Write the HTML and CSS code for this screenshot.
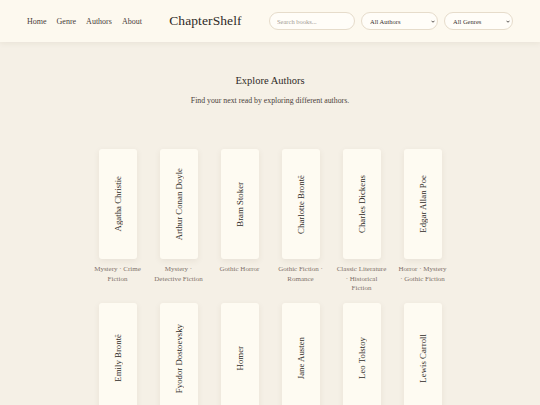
FILE: index.html
```html
<!DOCTYPE html>
<html lang="en">

<head>
    <meta charset="UTF-8">
    <meta name="viewport" content="width=device-width, initial-scale=1.0">
    <title>ChapterShelf - Explore Authors</title>
    <link rel="stylesheet" href="styles.css">
</head>

<body>
<!-- top bar -->
<header class="site-header">
    <nav class="main-nav">
        <a href="#">Home</a>
        <a href="#">Genre</a>
        <a href="#">Authors</a>
        <a href="#">About</a>
    </nav>
    <div class="logo">ChapterShelf</div>
    <div class="controls">
        <input class="search" type="text" placeholder="Search books...">
        <div class="select-wrap filter-authors">
            <select class="filter">
                <option>All Authors</option>
            </select>
            <svg class="chevron" viewBox="0 0 8 5" width="4" height="3"><path d="M1 1l3 3 3-3" fill="none" stroke="#2f2a27" stroke-width="1.6"/></svg>
        </div>
        <div class="select-wrap filter-genres">
            <select class="filter">
                <option>All Genres</option>
            </select>
            <svg class="chevron" viewBox="0 0 8 5" width="4" height="3"><path d="M1 1l3 3 3-3" fill="none" stroke="#2f2a27" stroke-width="1.6"/></svg>
        </div>
    </div>
</header>

<!-- authors list -->
<main class="authors-page">
    <h2 class="page-title">Explore Authors</h2>
    <p class="page-subtitle">Find your next read by exploring different authors.</p>

    <div class="author-grid">
        <div class="author">
            <div class="spine"><span>Agatha Christie</span></div>
            <p class="genres">Mystery · Crime Fiction</p>
        </div>
        <div class="author">
            <div class="spine"><span>Arthur Conan Doyle</span></div>
            <p class="genres">Mystery · Detective Fiction</p>
        </div>
        <div class="author">
            <div class="spine"><span>Bram Stoker</span></div>
            <p class="genres">Gothic Horror</p>
        </div>
        <div class="author">
            <div class="spine"><span>Charlotte Brontë</span></div>
            <p class="genres">Gothic Fiction · Romance</p>
        </div>
        <div class="author">
            <div class="spine"><span>Charles Dickens</span></div>
            <p class="genres">Classic Literature · Historical Fiction</p>
        </div>
        <div class="author">
            <div class="spine"><span>Edgar Allan Poe</span></div>
            <p class="genres">Horror · Mystery · Gothic Fiction</p>
        </div>
        <div class="author">
            <div class="spine"><span>Emily Brontë</span></div>
            <p class="genres">Gothic Fiction · Romance</p>
        </div>
        <div class="author">
            <div class="spine"><span>Fyodor Dostoevsky</span></div>
            <p class="genres">Philosophical Fiction</p>
        </div>
        <div class="author">
            <div class="spine"><span>Homer</span></div>
            <p class="genres">Epic Poetry</p>
        </div>
        <div class="author">
            <div class="spine"><span>Jane Austen</span></div>
            <p class="genres">Romance · Classic Literature</p>
        </div>
        <div class="author">
            <div class="spine"><span>Leo Tolstoy</span></div>
            <p class="genres">Historical Fiction</p>
        </div>
        <div class="author">
            <div class="spine"><span>Lewis Carroll</span></div>
            <p class="genres">Fantasy · Children's Literature</p>
        </div>
    </div>
</main>
</body>

</html>
```

FILE: styles.css
```css
body {
    font-family: "Liberation Serif", "Times New Roman", serif;
    margin: 0;
    padding: 0;
    background-color: #f5f0e6;
    color: #2f2a27;
}

/* header bar */
.site-header {
    height: 42px;
    display: flex;
    align-items: center;
    justify-content: space-between;
    padding: 0 27px;
    background-color: #fdf9ef;
    box-shadow: 0 1px 6px rgba(80, 60, 30, 0.08);
}

.main-nav {
    display: flex;
    gap: 10px;
}

.main-nav a,
.main-nav a:visited {
    font-size: 8px;
    color: #4a403a;
    text-decoration: none;
}

.logo {
    font-size: 13.5px;
    color: #2f2a27;
    letter-spacing: 0.1px;
}

.controls {
    display: flex;
    gap: 6px;
    align-items: center;
}

.search,
.filter {
    box-sizing: border-box;
    height: 18px;
    border: 1px solid #e6dccb;
    border-radius: 9px;
    background-color: #fffdf8;
    font-family: "Liberation Serif", serif;
    font-size: 6.5px;
    color: #3a332f;
    outline: none;
}

.search {
    width: 86px;
    padding: 0 7px;
}

.search::placeholder {
    color: #a39b94;
}

/* custom select with a small chevron */
.select-wrap {
    position: relative;
    display: flex;
}

.filter {
    width: 100%;
    padding: 0 10px 0 8px;
    appearance: none;
    -webkit-appearance: none;
}

.chevron {
    position: absolute;
    right: 3px;
    top: 8px;
    pointer-events: none;
}

.filter-authors {
    width: 77px;
}

.filter-genres {
    width: 69px;
}

/* page content */
.authors-page {
    padding: 32px 0 40px;
    text-align: center;
}

.page-title {
    margin: 0;
    font-size: 10.5px;
    font-weight: normal;
    line-height: 14px;
    color: #2f2a27;
}

.page-subtitle {
    margin: 8px 0 0;
    font-size: 7.8px;
    line-height: 10px;
    color: #4a403a;
}

.author-grid {
    display: grid;
    grid-template-columns: repeat(6, 52px);
    column-gap: 9px;
    row-gap: 9px;
    justify-content: center;
    margin-top: 43px;
}

.author {
    display: flex;
    flex-direction: column;
    align-items: center;
}

/* book spine card */
.spine {
    width: 38px;
    height: 110px;
    display: flex;
    align-items: center;
    justify-content: center;
    background-color: #fefbf2;
    border-radius: 3px;
    box-shadow: 0 2px 6px rgba(90, 70, 40, 0.08);
}

.spine span {
    writing-mode: vertical-rl;
    transform: rotate(180deg);
    font-size: 8.8px;
    white-space: nowrap;
    color: #2f2a27;
}

.genres {
    margin: 6px 0 0;
    font-size: 7px;
    line-height: 9.7px;
    color: #7f716a;
}
```
